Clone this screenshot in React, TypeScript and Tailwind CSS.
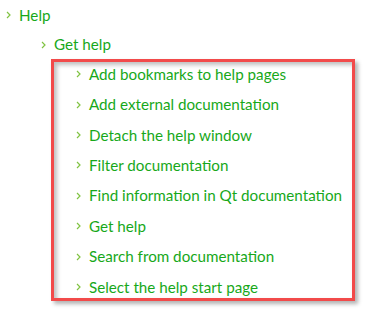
import type { ReactNode } from "react";

const ITEMS = [
  "Add bookmarks to help pages",
  "Add external documentation",
  "Detach the help window",
  "Filter documentation",
  "Find information in Qt documentation",
  "Get help",
  "Search from documentation",
  "Select the help start page",
];

function Chevron() {
  return (
    <svg width="5" height="8" viewBox="0 0 5 8" className="shrink-0">
      <path d="M1 1l3 3-3 3" fill="none" stroke="#80c342" strokeWidth="1.2" />
    </svg>
  );
}

function Row({ children, className }: { children: ReactNode; className?: string }) {
  return (
    <div className={"flex items-center " + (className ?? "")}>
      <span className="flex w-[13px] items-center">
        <Chevron />
      </span>
      <span className="text-[#17a81a]">{children}</span>
    </div>
  );
}

export default function App() {
  return (
    <div
      className="h-[309px] w-[383px] bg-white pl-[6px] text-[15.2px]"
      style={{ fontFamily: "Lato, 'Liberation Sans', sans-serif" }}
    >
      <Row className="h-[30px]">Help</Row>
      <div className="pl-[35px]">
        <Row className="h-[29px]">Get help</Row>
      </div>
      <div className="ml-[45px] h-[242px] w-[304px] border-[3px] border-[#f24a4a] pl-[22px] shadow-[3px_3px_4px_rgba(0,0,0,0.3),inset_3px_3px_4px_rgba(0,0,0,0.25)]">
        <div className="-mt-[3px]">
          {ITEMS.map((t) => (
            <Row key={t} className="h-[30.4px]">
              {t}
            </Row>
          ))}
        </div>
      </div>
    </div>
  );
}
